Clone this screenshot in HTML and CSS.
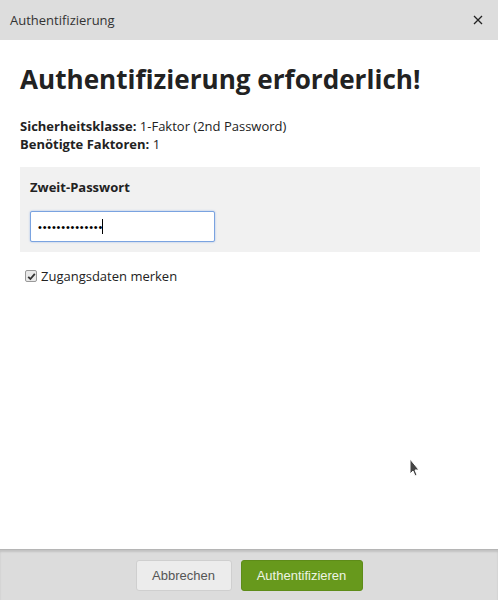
FILE: index.html
```html
<!DOCTYPE html>
<html lang="de">
<head>
<meta charset="utf-8">
<link rel="stylesheet" href="styles.css">
</head>
<body>
<div class="dialog">
  <div class="titlebar">
    <span class="titlebar-text">Authentifizierung</span>
    <svg class="close" width="10" height="10" viewBox="0 0 10 10"><path d="M1 1 L9 9 M9 1 L1 9" stroke="#222" stroke-width="1.3"/></svg>
  </div>
  <div class="content">
    <h1 class="heading">Authentifizierung erforderlich!</h1>
    <div class="info">
      <div><b>Sicherheitsklasse:</b> 1-Faktor (2nd Password)</div>
      <div><b>Benötigte Faktoren:</b> 1</div>
    </div>
    <div class="panel">
      <div class="panel-label">Zweit-Passwort</div>
      <div class="input"><span class="dots">••••••••••••••</span><span class="caret"></span></div>
    </div>
    <label class="remember">
      <span class="checkbox"><svg width="9" height="9" viewBox="0 0 9 9"><path d="M1.2 4.8 L3.4 7 L7.8 1.8" fill="none" stroke="#333" stroke-width="1.8"/></svg></span>
      Zugangsdaten merken
    </label>
  </div>
  <div class="footer">
    <button class="btn btn-cancel">Abbrechen</button>
    <button class="btn btn-ok">Authentifizieren</button>
  </div>
  <svg class="cursor" width="14" height="20" viewBox="0 0 14 20"><path d="M1 1 L1 16 L4 13 L6 18 L8 17 L6 12 L10 12 Z" fill="#444" stroke="#fff" stroke-width="1"/></svg>
</div>
</body>
</html>
```
FILE: styles.css
```css
* { box-sizing: border-box; }
html, body { margin: 0; padding: 0; }
body {
  width: 498px;
  height: 600px;
  font-family: "Open Sans", "Liberation Sans", sans-serif;
  color: #222;
  background: #fff;
  overflow: hidden;
}
.dialog {
  position: relative;
  height: 600px;
  display: flex;
  flex-direction: column;
}
.titlebar {
  height: 40px;
  background: #dddddd;
  display: flex;
  align-items: center;
  justify-content: space-between;
  padding: 0 15px 0 10px;
  font-size: 13px;
  color: #333;
}
.close { display: block; }
.content {
  flex: 1;
  padding: 0 18px 0 20px;
}
.heading {
  margin: 21px 0 0;
  font-size: 26.1px;
  font-weight: 700;
  line-height: 36px;
  color: #222;
}
.info {
  margin-top: 20px;
  font-size: 13px;
  line-height: 18px;
  color: #222;
}
.info b { font-weight: 700; }
.panel {
  margin-top: 14px;
  background: #f1f1f1;
  padding: 11px 10px 10px 10px;
  height: 85px;
}
.panel-label {
  font-size: 13px;
  font-weight: 700;
  line-height: 18px;
}
.input {
  margin-top: 15px;
  width: 185px;
  height: 31px;
  background: #fff;
  border: 1px solid #7aa3e0;
  border-radius: 2px;
  box-shadow: 0 0 2px rgba(90,140,220,0.6);
  display: flex;
  align-items: center;
  padding-left: 7px;
  font-family: "Liberation Sans", sans-serif;
}
.dots {
  font-size: 11px;
  letter-spacing: 0.8px;
  color: #000;
}
.caret {
  display: inline-block;
  width: 1px;
  height: 15px;
  background: #000;
  margin-left: -1px;
}
.remember {
  display: flex;
  align-items: center;
  gap: 4px;
  margin-top: 15px;
  padding-left: 5px;
  font-size: 13px;
  color: #222;
}
.checkbox {
  width: 12px;
  height: 12px;
  border: 1px solid #999;
  border-radius: 2px;
  background: #e9e9e9;
  display: flex;
  align-items: center;
  justify-content: center;
}
.footer {
  height: 51px;
  background: #dcdcdc;
  border-top: 1px solid #b5b5b5;
  box-shadow: inset 0 2px 2px rgba(0,0,0,0.12);
  display: flex;
  justify-content: center;
  align-items: center;
  gap: 9px;
  padding-top: 1px;
}
.btn {
  height: 31px;
  border-radius: 3px;
  font-family: "Liberation Sans", Arial, sans-serif;
  font-size: 13px;
  padding: 0 14px;
  cursor: pointer;
}
.btn-cancel {
  width: 96px;
  background: #ececec;
  border: 1px solid #cfcfcf;
  color: #555;
}
.btn-ok {
  width: 122px;
  background: #67991c;
  border: 1px solid #5e8c19;
  color: #eef4e4;
}
.cursor {
  position: absolute;
  left: 409px;
  top: 458px;
}
```
